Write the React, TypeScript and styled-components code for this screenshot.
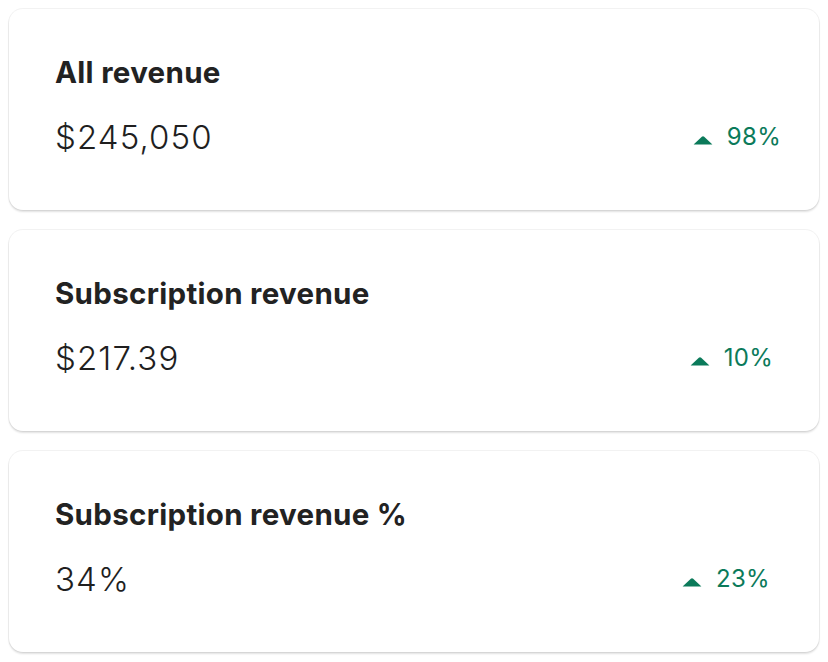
import React from 'react'
import styled, { createGlobalStyle } from 'styled-components'

const GlobalStyle = createGlobalStyle`
  html, body {
    margin: 0;
    padding: 0;
    background: #ffffff;
    font-family: Inter, "Noto Sans", "Liberation Sans", sans-serif;
  }
`

const Stack = styled.div`
  display: flex;
  flex-direction: column;
  gap: 20px;
  padding: 9px 9px 10px;
`

const Card = styled.section`
  height: 201px;
  box-sizing: border-box;
  padding: 46px 0 0 46px;
  border-radius: 14px;
  background: #ffffff;
  box-shadow: 0 0 0 1px rgba(0, 0, 0, 0.05), 0 2px 2px rgba(0, 0, 0, 0.12);
`

const Title = styled.h2`
  margin: 0;
  font-size: 29.5px;
  line-height: 34px;
  font-weight: 700;
  color: #222222;
  letter-spacing: 0.3px;
`

const Row = styled.div<{ $inset: number }>`
  display: flex;
  align-items: center;
  justify-content: space-between;
  margin-top: 29px;
  padding-right: ${(p) => p.$inset}px;
`

const Value = styled.div`
  font-size: 33px;
  line-height: 1.2;
  font-weight: 300;
  color: #1f1f1f;
  letter-spacing: 1.1px;
`

const Change = styled.div`
  display: flex;
  align-items: center;
  gap: 14px;
  font-size: 24px;
  line-height: 1.2;
  font-weight: 400;
  color: #0b7a5a;
  letter-spacing: 0.3px;
`

const Arrow = styled.svg`
  width: 20px;
  height: 10px;
  margin-top: 5px;
  fill: #0b7a5a;
`

const UpArrow = () => (
  <Arrow viewBox="0 0 20 10">
    <path d="M0.6 9.6 L8.8 1.7 Q10 0.6 11.2 1.7 L19.4 9.6 Z" />
  </Arrow>
)

const metrics = [
  { title: 'All revenue', value: '$245,050', change: '98%', inset: 38 },
  { title: 'Subscription revenue', value: '$217.39', change: '10%', inset: 46 },
  { title: 'Subscription revenue %', value: '34%', change: '23%', inset: 49 },
]

export default function App() {
  return (
    <>
      <GlobalStyle />
      <Stack>
        {metrics.map((m) => (
          <Card key={m.title}>
            <Title>{m.title}</Title>
            <Row $inset={m.inset}>
              <Value>{m.value}</Value>
              <Change>
                <UpArrow />
                {m.change}
              </Change>
            </Row>
          </Card>
        ))}
      </Stack>
    </>
  )
}
